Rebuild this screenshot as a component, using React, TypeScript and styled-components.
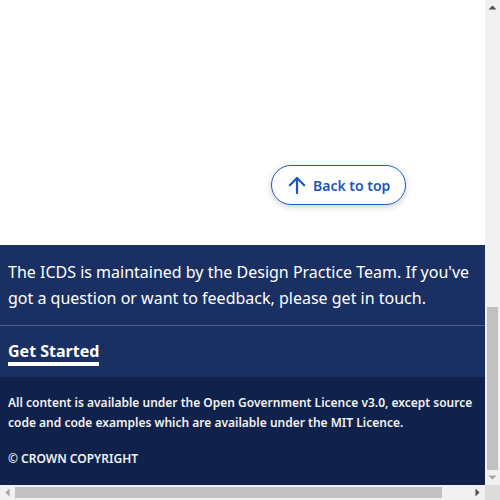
import React from "react";
import styled, { createGlobalStyle } from "styled-components";

const Global = createGlobalStyle`
  html, body { margin: 0; padding: 0; overflow: hidden; }
  body { font-family: "Noto Sans", "Open Sans", sans-serif; background: #fff; }
  * { box-sizing: border-box; }
`;

const Frame = styled.div`
  width: 500px;
  height: 500px;
  display: grid;
  grid-template-columns: 485px 15px;
  grid-template-rows: 485px 15px;
  background: #fff;
`;

const Screen = styled.div`
  display: flex;
  flex-direction: column;
  overflow: hidden;
`;

const Hero = styled.main`
  flex: 1;
  display: flex;
  flex-direction: column;
  justify-content: flex-end;
  align-items: flex-start;
  padding: 0 0 40px 271px;
`;

const BackToTop = styled.a`
  display: inline-flex;
  align-items: center;
  gap: 7px;
  height: 40px;
  padding: 0 15px 0 16px;
  border: 1px solid #1f5cc6;
  border-radius: 20px;
  background: #fff;
  color: #1b55ba;
  font-size: 14px;
  font-weight: 600;
  text-decoration: none;
  box-shadow: 0 2px 6px rgba(0, 0, 0, 0.18);
  svg { display: block; }
`;

const Footer = styled.footer`
  color: #fff;
`;

const Upper = styled.div`
  background: #1a3062;
`;

const Intro = styled.p`
  margin: 0;
  padding: 14px 8px 14px;
  font-size: 16px;
  line-height: 26px;
  border-bottom: 1px solid #4d6190;
`;

const LinkRow = styled.div`
  padding: 14px 8px 11px;
`;

const NavLink = styled.a`
  display: inline-block;
  color: #fff;
  font-size: 16px;
  font-weight: 700;
  line-height: 21px;
  text-decoration: none;
  border-bottom: 4px solid #fff;
`;

const Lower = styled.div`
  background: #10224b;
  padding: 16px 8px;
`;

const Small = styled.p`
  margin: 0;
  font-size: 12px;
  font-weight: 600;
  line-height: 20px;
  color: #f2f2f2;
  & + & { margin-top: 16px; }
`;

const ScrollBar = styled.div<{ $vertical?: boolean }>`
  display: flex;
  flex-direction: ${(p) => (p.$vertical ? "column" : "row")};
  background: #f1f1f1;
`;

const ArrowBtn = styled.div`
  flex: 0 0 15px;
  width: 15px;
  height: 15px;
  display: flex;
  align-items: center;
  justify-content: center;
  svg { display: block; }
`;

const Track = styled.div<{ $vertical?: boolean }>`
  flex: 1;
  display: flex;
  flex-direction: ${(p) => (p.$vertical ? "column" : "row")};
  justify-content: ${(p) => (p.$vertical ? "flex-end" : "flex-start")};
  padding: ${(p) => (p.$vertical ? "0 2px" : "2px 0")};
`;

const Thumb = styled.div<{ $size: number; $vertical?: boolean }>`
  background: #c1c1c1;
  ${(p) => (p.$vertical ? `height: ${p.$size}px;` : `width: ${p.$size}px;`)}
  flex: 0 0 auto;
`;

const Corner = styled.div`
  background: #dcdcdc;
`;

const Tri = ({ dir, color }: { dir: "up" | "down" | "left" | "right"; color: string }) => {
  const pts = {
    up: "3.5,9.5 11.5,9.5 7.5,5.5",
    down: "3.5,5.5 11.5,5.5 7.5,9.5",
    left: "9.5,3.5 9.5,11.5 5.5,7.5",
    right: "5.5,3.5 5.5,11.5 9.5,7.5",
  }[dir];
  return (
    <svg width="15" height="15" viewBox="0 0 15 15">
      <polygon points={pts} fill={color} />
    </svg>
  );
};

export default function App() {
  return (
    <>
      <Global />
      <Frame>
        <Screen>
          <Hero>
            <BackToTop href="#top">
              <svg width="18" height="18" viewBox="0 0 18 18" fill="none" stroke="currentColor" strokeWidth="2.2" strokeLinecap="round" strokeLinejoin="round">
                <path d="M9 2v15" />
                <path d="M1.8 9.2L9 2l7.2 7.2" />
              </svg>
              Back to top
            </BackToTop>
          </Hero>
          <Footer>
            <Upper>
              <Intro>
                The ICDS is maintained by the Design Practice Team. If you've got a question or want to feedback, please get in touch.
              </Intro>
              <LinkRow>
                <NavLink href="#get-started">Get Started</NavLink>
              </LinkRow>
            </Upper>
            <Lower>
              <Small>
                All content is available under the Open Government Licence v3.0, except source code and code examples which are available under the MIT Licence.
              </Small>
              <Small>© CROWN COPYRIGHT</Small>
            </Lower>
          </Footer>
        </Screen>
        <ScrollBar $vertical>
          <ArrowBtn><Tri dir="up" color="#505050" /></ArrowBtn>
          <Track $vertical>
            <Thumb $vertical $size={163} />
          </Track>
          <ArrowBtn><Tri dir="down" color="#a3a3a3" /></ArrowBtn>
        </ScrollBar>
        <ScrollBar>
          <ArrowBtn><Tri dir="left" color="#a3a3a3" /></ArrowBtn>
          <Track>
            <Thumb $size={427} />
          </Track>
          <ArrowBtn><Tri dir="right" color="#505050" /></ArrowBtn>
        </ScrollBar>
        <Corner />
      </Frame>
    </>
  );
}
